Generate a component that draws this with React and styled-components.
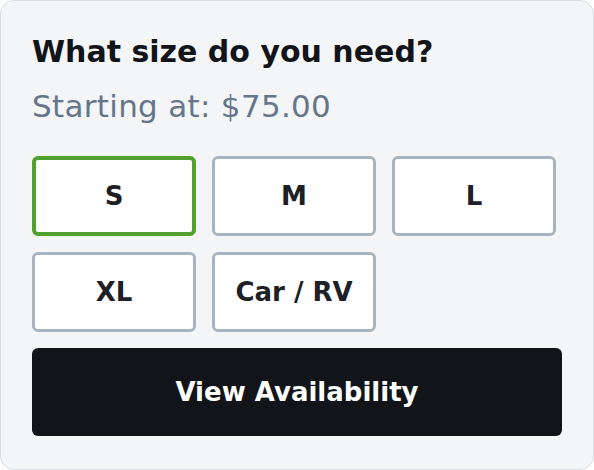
import React, { useState } from "react";
import styled, { createGlobalStyle } from "styled-components";

const Global = createGlobalStyle`
  html, body { margin: 0; padding: 0; background: #ffffff; }
  body { font-family: "DejaVu Sans", Inter, sans-serif; }
  * { box-sizing: border-box; }
`;

const Card = styled.div`
  width: 594px;
  height: 470px;
  background: #f4f5f7;
  border: 1px solid #d9dde2;
  border-radius: 14px;
  padding: 33px 31px;
  display: flex;
  flex-direction: column;
`;

const Title = styled.h2`
  margin: 0;
  font-size: 30px;
  line-height: 36px;
  font-weight: 700;
  color: #111418;
  white-space: nowrap;
`;

const Price = styled.p`
  margin: 17px 0 0;
  font-size: 31px;
  line-height: 38px;
  font-weight: 400;
  color: #66768a;
  letter-spacing: 0.3px;
  white-space: nowrap;
`;

const Sizes = styled.div`
  margin-top: 31px;
  display: grid;
  grid-template-columns: repeat(3, 164px);
  column-gap: 16px;
  row-gap: 16px;
`;

const SizeButton = styled.button`
  height: 80px;
  background: #ffffff;
  border: ${(p) => (p.$active ? "4px solid #52a02f" : "3px solid #a9b6c2")};
  border-radius: 6px;
  font-family: inherit;
  font-size: 26px;
  font-weight: 700;
  color: #1d2024;
  cursor: pointer;
  padding: 0;
  white-space: nowrap;
`;

const Cta = styled.button`
  margin-top: 16px;
  height: 90px;
  width: 100%;
  border: none;
  border-radius: 6px;
  background: #11151a;
  color: #ffffff;
  font-family: inherit;
  font-size: 26px;
  font-weight: 700;
  cursor: pointer;
`;

const sizes = ["S", "M", "L", "XL", "Car / RV"];

export default function App() {
  const [active, setActive] = useState("S");
  return (
    <>
      <Global />
      <Card>
        <Title>What size do you need?</Title>
        <Price>Starting at: $75.00</Price>
        <Sizes>
          {sizes.map((s) => (
            <SizeButton key={s} $active={active === s} onClick={() => setActive(s)}>
              {s}
            </SizeButton>
          ))}
        </Sizes>
        <Cta>View Availability</Cta>
      </Card>
    </>
  );
}
